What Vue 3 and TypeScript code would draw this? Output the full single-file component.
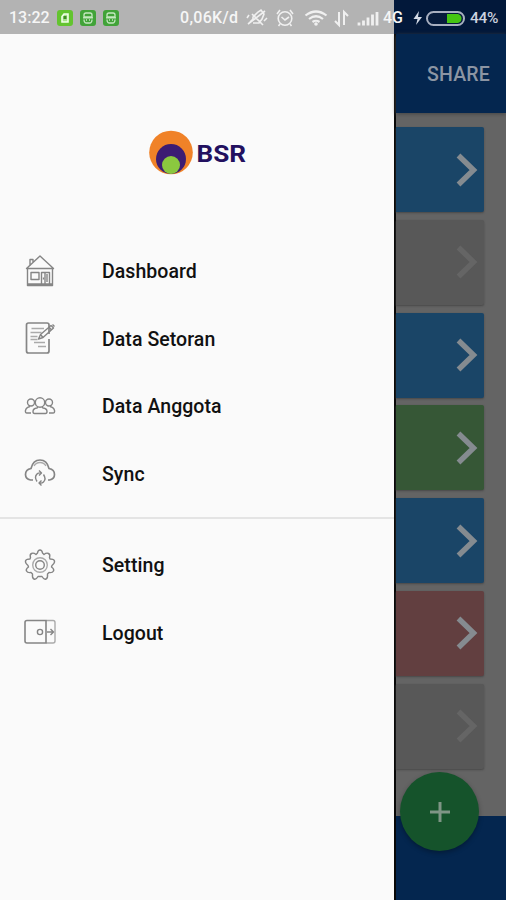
<script setup lang="ts">
type IconName = 'home' | 'note' | 'people' | 'cloud' | 'gear' | 'exit'

interface MenuItem {
  label: string
  icon: IconName
}

const primary: MenuItem[] = [
  { label: 'Dashboard', icon: 'home' },
  { label: 'Data Setoran', icon: 'note' },
  { label: 'Data Anggota', icon: 'people' },
  { label: 'Sync', icon: 'cloud' },
]

const secondary: MenuItem[] = [
  { label: 'Setting', icon: 'gear' },
  { label: 'Logout', icon: 'exit' },
]

const groups: MenuItem[][] = [primary, secondary]
const cards: string[] = ['blue', 'grey', 'blue', 'green', 'blue', 'red', 'grey']
</script>

<template>
  <div class="screen">
    <header class="status">
      <div class="status-left">
        <span class="clock">13:22</span>
        <svg class="apps" width="64" height="18" viewBox="0 0 64 18">
          <rect x="0" y="1" width="16" height="16" rx="3" fill="#63c42f" />
          <path d="M5 13V7.5L7 5h4v8z" fill="#a8e08a" stroke="#f0ffe8" stroke-width="1.6" />
          <rect x="6.5" y="7" width="3" height="3" fill="#3f8f22" />
          <g v-for="x in [23, 46]" :key="x" :transform="`translate(${x} 0)`">
            <rect x="0" y="1" width="16" height="16" rx="3" fill="#41a338" />
            <path d="M4 8V6q0-2 2-2h4q2 0 2 2v2zM3 8.800h10M4 10.500q0 3.500 2.500 3.500h3q2.500 0 2.500-3.500M6 11h1M9 11h1" fill="none" stroke="#c5e8c0" stroke-width="1.3" />
          </g>
        </svg>
      </div>
      <div class="status-mid">
        <span class="rate">0,06K/d</span>
        <svg class="signals" width="134" height="22" viewBox="245 6 134 22" fill="none" stroke="#f0f0f0" stroke-width="1.6">
          <path d="M250 21l3-3v-2l5-5 3-2 3 4-2 5-3 4h-6M252 13l11 11M248 23l17-13M247 17l2-3M264 20l3-3" />
          <circle cx="285" cy="17.500" r="6.800" />
          <path d="M281.500 16l3.500 3 4-3M277 13l3-4M290 9l3 4M280 23l-1.500 2M290 23l1.500 2" />
          <path d="M305.500 14.500q10.500-8 21 0M309 18q7-5.500 14 0M312.500 21q3.500-2.500 7 0" stroke-width="2.200" />
          <circle cx="316" cy="23" r="1.800" fill="#f0f0f0" stroke="none" />
          <path d="M339 11v13l-4-4M344 24V11l4 4" stroke-width="2" />
          <path d="M359 24.500v-3M363.500 24.500v-5M368 24.500v-8M372.500 24.500v-11M377 24.500v-13.500" stroke-width="2.800" />
        </svg>
        <span class="network">4G</span>
      </div>
      <div class="status-right">
        <svg width="52" height="18" viewBox="413 8 52 18">
          <path d="M419 10l-5.500 8h4l-1.500 6 6-8h-4z" fill="#d4dae6" />
          <rect x="427" y="11" width="37" height="13" rx="6.500" fill="#061b3c" stroke="#a8afc0" stroke-width="2" />
          <path d="M447 13h11q3.500 1 3.500 4.500t-3.500 4.500h-11z" fill="#45c513" />
        </svg>
        <span class="percent">44%</span>
      </div>
    </header>

    <div class="body">
      <nav class="drawer">
        <div class="brand">
          <svg width="44" height="46" viewBox="0 0 44 46">
            <circle cx="22" cy="22.500" r="21.800" fill="#f08228" />
            <circle cx="22" cy="29" r="15" fill="#3c1c73" />
            <circle cx="22" cy="35" r="9" fill="#8bc83f" />
          </svg>
          <svg class="wordmark" width="60" height="34" viewBox="0 0 60 34">
            <text x="0.5" y="22" textLength="49.500" lengthAdjust="spacingAndGlyphs">BSR</text>
          </svg>
        </div>

        <ul v-for="(group, g) in groups" :key="g" class="group">
          <li v-for="item in group" :key="item.label" class="item">
            <svg class="icon" width="34" height="34" viewBox="0 0 34 34">
              <g v-if="item.icon === 'home'">
                <path d="M3.500 14.500L17 2l13.500 12.500zM4.500 14.500v17h25v-17M4.500 30h25M7 12V5.500h3v3" />
                <path d="M8 18.500h8v7H8zM18.500 30V18.500h8V30M22 18.500V30M24 20v8" />
                <path d="M20.500 23.500v2" />
              </g>
              <g v-else-if="item.icon === 'note'">
                <path d="M26 13V4q0-2-2-2H5.500q-2 0-2 2v26q0 2 2 2H24q2 0 2-2V18" stroke-width="1.700" />
                <path class="faint" d="M8.500 7.500H21M7.500 11.500h11M7.500 15.500h7M11 21.500h11M7.500 18.500h7M15 25.500h8" />
                <path d="M15.500 18l2-4.500L28 4.500l2.500 2.500L20 16.500zM17.500 13.500l2.500 3M26 6l2.500 3M29.500 3.500l2 2" />
              </g>
              <g v-else-if="item.icon === 'people'">
                <circle cx="17" cy="13.500" r="4.700" />
                <path d="M11.500 24.500q-1.500 0-1.500-2 0-3 4-3.500l1-1M22.500 24.500q1.500 0 1.500-2 0-3-4-3.500l-1-1M11.500 24.500h11" />
                <circle cx="8" cy="13.500" r="3.500" />
                <circle cx="26" cy="13.500" r="3.500" />
                <path d="M7 17.500q-4 1-4.500 4-.5 2.500 1.500 2.500h4M27 17.500q4 1 4.500 4 .5 2.500-1.500 2.500h-4" />
              </g>
              <g v-else-if="item.icon === 'cloud'">
                <path d="M10 24H7.500q-5-1-5-5.500 0-5 5.500-6Q10 4 17 4t9 8.500q5.500 1 5.500 6 0 4.500-5 5.500H25" stroke-width="1.700" />
                <path class="faint" d="M11 10q2-3.500 6-3.500t6 3.500" />
                <path d="M14 25.500q-3-4.500 0-7.500 1.500-1.500 4-1M16 14.500l2.500 2.500-2.500 2.500M20.500 18.500q3 4.500 0 7.500-1.500 1.500-4 1M18.500 29.500l-2.500-2.500 2.500-2.500" />
              </g>
              <g v-else-if="item.icon === 'gear'">
                <path d="M14.500 5q.5-3 2.500-3T19.500 5l1.500 1.500q2.500-2 4.500-1t1 4l.5 1.500q4 0 4.500 2t-2.500 4.500l-.5 1.500q3 2 2 4t-4.500 1.500L24.500 26q.5 4-1.500 5t-4-2.500h-4q-2 3.500-4 2.500t-1.500-5L8 24.500q-3.500.5-4.500-1.500t2-4L5 17.500q-3-2.500-2.500-4.500T7 11l.5-1.500q-1-3 1-4t4.500 1z" />
                <circle cx="17" cy="17" r="7.300" class="faint" />
                <circle cx="17" cy="17" r="4.300" />
              </g>
              <g v-else>
                <path class="faint" d="M23 5.500h7q2 0 2 2V26q0 2-2 2h-7" />
                <path d="M23 5.500H4q-2 0-2 2V26q0 2 2 2h19z" stroke-width="1.600" />
                <path d="M24 17h6.500M27.500 14l3 3-3 3" />
                <circle cx="17" cy="17" r="2.600" />
              </g>
            </svg>
            <span class="label">{{ item.label }}</span>
          </li>
        </ul>
      </nav>

      <main class="page">
        <div class="toolbar"><span class="share">SHARE</span></div>
        <div class="cards">
          <div v-for="(tone, i) in cards" :key="i" class="card" :class="tone">
            <svg width="22" height="34" viewBox="0 0 22 34">
              <path d="M2.500 2.500L17.500 17 2.500 31.500" />
            </svg>
          </div>
        </div>
        <div class="footer"></div>
        <button class="fab" type="button">
          <svg width="22" height="22" viewBox="0 0 22 22"><path d="M11 1v20M1 11h20" /></svg>
        </button>
      </main>
    </div>
  </div>
</template>

<style>
body {
  margin: 0;
}
</style>

<style scoped>
.screen {
  width: 506px;
  height: 900px;
  display: flex;
  flex-direction: column;
  overflow: hidden;
  font-family: Roboto, "Liberation Sans", sans-serif;
  background: #fafafa;
}
.status {
  height: 34px;
  flex: none;
  display: flex;
  align-items: center;
  box-sizing: border-box;
  padding: 2px 0 0 9px;
  color: #f6f6f6;
  font-size: 16px;
  font-weight: 500;
  line-height: 32px;
  white-space: nowrap;
  background: linear-gradient(90deg, #b3b3b3 394px, #02183a 394px);
}
.status-left {
  width: 171px;
  display: flex;
  align-items: center;
  gap: 7px;
}
.status-mid {
  width: 233px;
  display: flex;
  align-items: center;
}
.rate {
  width: 65px;
  letter-spacing: 0.3px;
}
.clock {
  width: 41px;
}
.network {
  margin-left: 4px;
}
.status-right {
  display: flex;
  align-items: center;
  gap: 5px;
  color: #ccd2df;
}
.percent {
  font-size: 15.5px;
  letter-spacing: -0.3px;
}
.body {
  flex: 1;
  display: flex;
}
.drawer {
  width: 394px;
  flex: none;
  background: #fafafa;
}
.brand {
  display: flex;
  height: 203px;
  box-sizing: border-box;
  padding: 96px 0 0 149px;
  gap: 3px;
}
.wordmark {
  margin-top: 10px;
}
.wordmark text {
  font: 700 24.5px Roboto, sans-serif;
  fill: #22105f;
}
.group {
  list-style: none;
  margin: 0;
  padding: 0 0 10px;
}
.group + .group {
  border-top: 2px solid #e4e4e4;
  padding-top: 12px;
}
.item {
  display: flex;
  align-items: center;
  height: 67.500px;
  padding-left: 23px;
  gap: 45px;
}
.icon {
  fill: none;
  stroke: #858585;
  stroke-width: 1.4;
  stroke-linejoin: round;
}
.faint {
  stroke: #aaa;
}
.label {
  padding-top: 2px;
  font-size: 19.5px;
  font-weight: 500;
  color: #111;
  letter-spacing: 0.06px;
}
.page {
  position: relative;
  flex: 1;
  display: flex;
  flex-direction: column;
  background: #646464;
  border-left: 2px solid #080808;
}
.toolbar {
  height: 79px;
  flex: none;
  display: flex;
  align-items: center;
  box-sizing: border-box;
  padding: 2px 16px 0 0;
  justify-content: flex-end;
  background: #04264f;
  box-shadow: 0 1px 4px #444;
}
.share {
  font-size: 19.5px;
  font-weight: 500;
  letter-spacing: 0.2px;
  color: #8c95a3;
}
.cards {
  flex: 1;
  display: flex;
  flex-direction: column;
  gap: 7.800px;
  padding: 14px 22px 0 0;
}
.card {
  height: 85px;
  flex: none;
  display: flex;
  align-items: center;
  justify-content: flex-end;
  box-sizing: border-box;
  padding-right: 6px;
  border-radius: 0 2px 2px 0;
  box-shadow: 0 1px 2px #484848;
}
.card path {
  fill: none;
  stroke: #858b90;
  stroke-width: 5.4;
}
.blue {
  background: #1a4567;
}
.grey {
  background: #585858;
}
.grey path {
  stroke: #656565;
}
.green {
  background: #365736;
}
.red {
  background: #623f40;
}
.footer {
  height: 84px;
  flex: none;
  background: #04264f;
}
.fab {
  position: absolute;
  right: 27px;
  bottom: 49px;
  width: 79px;
  height: 79px;
  display: grid;
  place-items: center;
  border: 0;
  padding: 0;
  border-radius: 50%;
  background: #15532b;
  box-shadow: 0 2px 5px rgba(0, 0, 0, 0.3);
}
.fab path {
  stroke: #7f9586;
  stroke-width: 3;
}
</style>
